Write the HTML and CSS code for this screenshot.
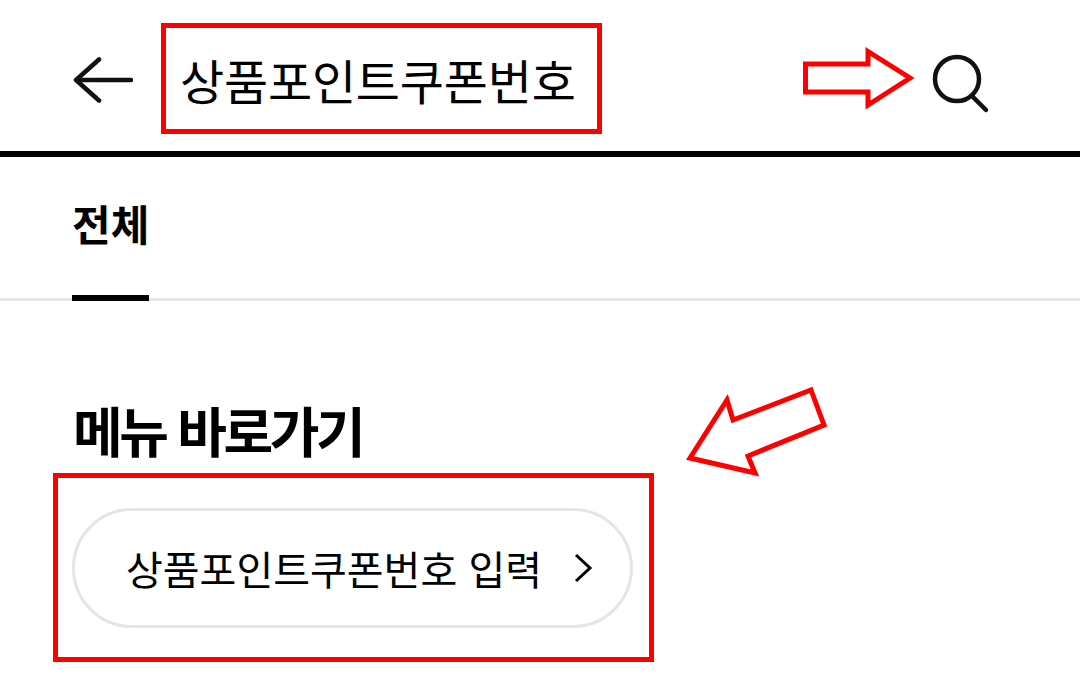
FILE: index.html
```html
<!DOCTYPE html>
<html lang="ko">
<head>
  <meta charset="utf-8">
  <title>상품포인트쿠폰번호</title>
  <link rel="stylesheet" href="styles.css">
</head>
<body>

<header class="topbar">
  <svg class="icon-back" width="60" height="48" viewBox="0 0 60 48">
    <path d="M3 24H58M26 3.5L3 24l23 20.500" fill="none" stroke="#111" stroke-width="4.500" stroke-linecap="round" stroke-linejoin="round"/>
  </svg>
  <h1 class="title">상품포인트쿠폰번호</h1>
  <svg class="icon-search" width="58" height="66" viewBox="0 0 58 66">
    <circle cx="25" cy="25" r="22" fill="none" stroke="#111" stroke-width="4.500"/>
    <path d="M40 42l14 14" fill="none" stroke="#111" stroke-width="4.500" stroke-linecap="round"/>
  </svg>
</header>

<nav class="tabs">
  <a class="tab">전체</a>
</nav>

<section class="shortcuts">
  <h2 class="shortcuts-title">메뉴 바로가기</h2>
  <a class="pill">
    <span class="pill-label">상품포인트쿠폰번호 입력</span>
    <svg width="20" height="32" viewBox="0 0 20 32">
      <path d="M3 3l14 13L3 29" fill="none" stroke="#000" stroke-width="3"/>
    </svg>
  </a>
</section>

<!-- red markup drawn over the screenshot -->
<div class="mark mark-title"></div>
<div class="mark mark-pill"></div>
<svg class="mark-arrows" width="1080" height="700" viewBox="0 0 1080 700">
  <polygon points="805.500,64 868,64 868,51.500 910,78 868,105 868,92 805.500,92" fill="none" stroke="#f00" stroke-width="5"/>
  <polygon points="811,390 824,425 748,456 755,473 690,458 727,400 733,420" fill="none" stroke="#f00" stroke-width="5"/>
</svg>

</body>
</html>
```

FILE: styles.css
```css
body {
  margin: 0;
  background: #fff;
  color: #000;
  font-family: "Noto Sans CJK KR", "Liberation Sans", sans-serif;
}

.topbar {
  display: flex;
  align-items: center;
  height: 151px;
  padding: 0 90px 0 73px;
  border-bottom: 6px solid #000;
}
.icon-back {
  flex: none;
  margin-top: 8px;
}
.title {
  margin: 6px 0 0 47px;
  font-size: 48px;
  font-weight: 400;
  line-height: 60px;
  letter-spacing: -0.2px;
}
.icon-search {
  flex: none;
  margin: 22px 0 0 auto;
}

.tabs {
  display: flex;
  height: 141px;
  padding-left: 72px;
  border-bottom: 3px solid #e5e5e5;
}
.tab {
  height: 138px;
  font-size: 42px;
  font-weight: 700;
  line-height: 132px;
  border-bottom: 6px solid #000;
}

.shortcuts {
  padding: 0 72px;
}
.shortcuts-title {
  margin: 94px 0 0 1px;
  font-size: 54px;
  font-weight: 700;
  line-height: 70px;
  letter-spacing: -3.4px;
}
.pill {
  display: flex;
  align-items: center;
  justify-content: space-between;
  box-sizing: border-box;
  width: 561px;
  height: 120px;
  margin-top: 43px;
  padding: 0 37px 0 51px;
  border: 3px solid #e5e5e5;
  border-radius: 60px;
}
.pill-label {
  font-size: 40px;
  line-height: 52px;
}

.mark {
  position: absolute;
  box-sizing: border-box;
  border: 5px solid #f00;
}
.mark-title {
  left: 161px;
  top: 23px;
  width: 441px;
  height: 111px;
}
.mark-pill {
  left: 53px;
  top: 473px;
  width: 601px;
  height: 189px;
}
.mark-arrows {
  position: absolute;
  left: 0;
  top: 0;
}
```
